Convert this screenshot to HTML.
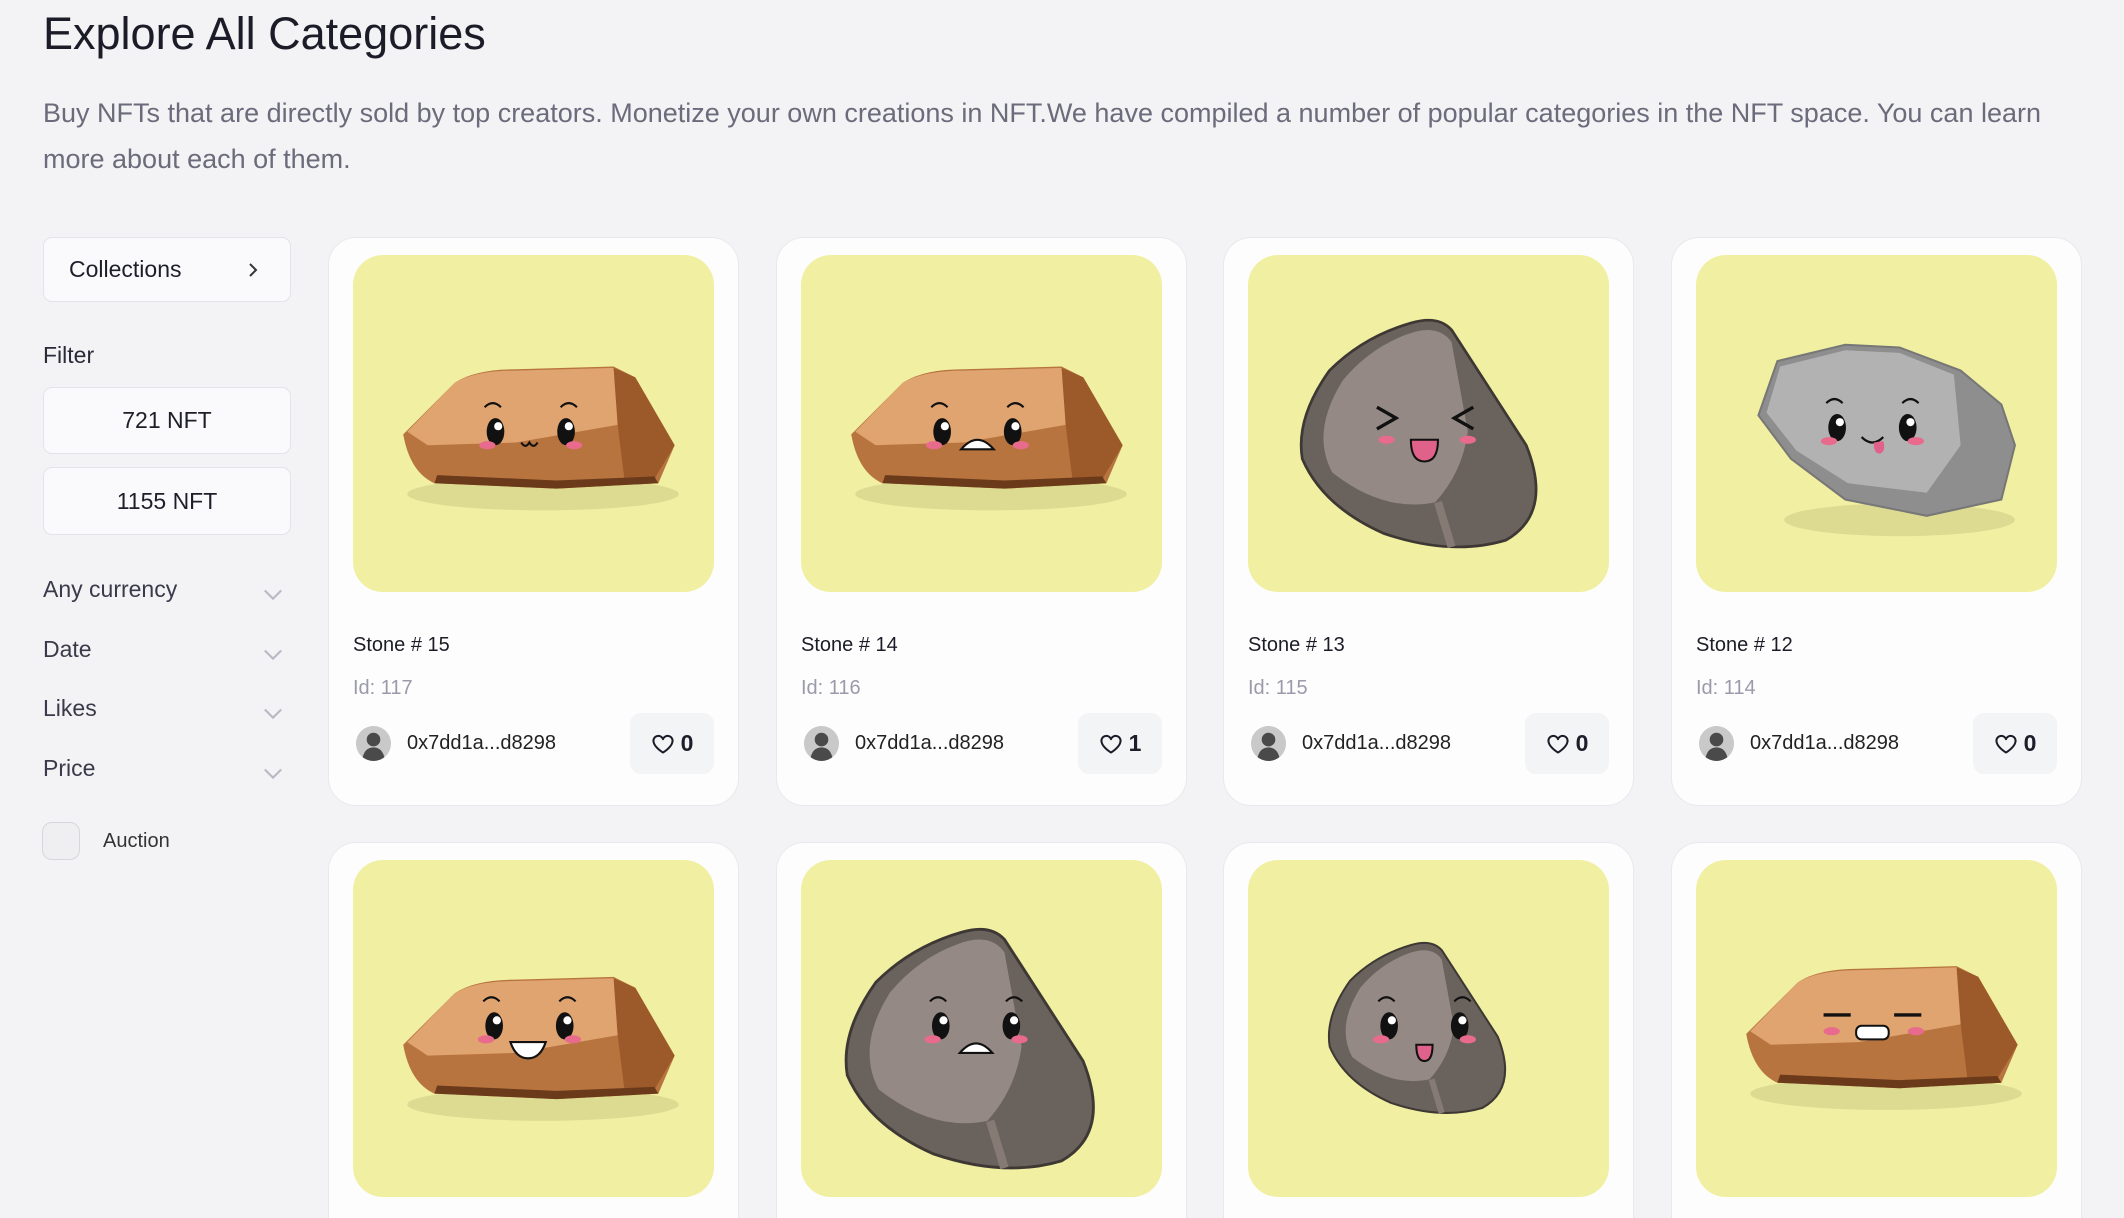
<!DOCTYPE html>
<html><head><meta charset="utf-8"><style>
*{box-sizing:border-box;margin:0;padding:0}
html{width:2124px;height:1218px;overflow:hidden}
body{width:2124px;height:1218px;overflow:hidden;background:#f3f3f5;font-family:"Liberation Sans",Arial,sans-serif;color:#1e1e2a;position:relative}
h1{position:absolute;left:43px;top:8px;font-size:45px;font-weight:400;color:#1c1c28}
.desc{position:absolute;left:43px;top:90px;width:2040px;font-size:27px;line-height:46px;color:#6b6b7b}
.box{position:absolute;left:43px;width:248px;background:#fafafc;border:1.5px solid #e3e3e9;border-radius:9px;font-size:23px;display:flex;align-items:center}
.sel{position:absolute;left:43px;width:248px;font-size:23px;color:#3a3a4a}
.sel svg{position:absolute;right:4px;top:4px}
.card{position:absolute;width:411px;height:569px;background:#fdfdfd;border:1.5px solid #e9e9ec;border-radius:28px}
.card.r2{height:376px;border-bottom:none;border-radius:28px 28px 0 0}
.img{position:absolute;left:24px;top:17px;width:361px;height:337px;background:#f1efa1;border-radius:30px;overflow:hidden}
.img svg{width:100%;height:100%}
.nm{position:absolute;left:24px;top:396px;font-size:20px;color:#1c1c28}
.id{position:absolute;left:24px;top:439px;font-size:20px;color:#9a9aaa}
.av{position:absolute;left:27px;top:488px;width:35px;height:35px;border-radius:50%;background:#c8c8c8;overflow:hidden}
.ad{position:absolute;left:78px;top:494px;font-size:20px;color:#222}
.lk{position:absolute;left:301px;top:475px;width:84px;height:61px;background:#f3f4f6;border-radius:11px;display:flex;align-items:center;justify-content:center;gap:6px;font-weight:700;font-size:23px}
</style></head><body>
<svg width="0" height="0" style="position:absolute">
<defs>
<symbol id="brick" viewBox="0 0 266 248">
<ellipse cx="140" cy="176" rx="100" ry="12" fill="#d8d48e" opacity=".8"/>
<path d="M37,132 L75,94 Q90,84 120,84 L192,82 L208,90 L237,140 L225,168 L150,172 L60,168 Q42,160 37,132Z" fill="#b8743f"/>
<path d="M40,130 L75,94 Q90,85 120,85 L192,83 L200,100 L195,125 L120,138 L55,140Z" fill="#e0a470"/>
<path d="M192,83 L208,90 L237,140 L222,165 L200,165 L195,125Z" fill="#9c5a2a"/>
<path d="M60,168 L150,172 L225,168 L222,163 L150,166 L62,162Z" fill="#6b3a1a"/>
</symbol>
<symbol id="round" viewBox="0 0 266 248">
<path d="M120,50 Q140,44 150,55 L205,140 Q225,190 190,210 Q150,222 100,205 Q55,185 40,150 Q35,120 60,85 Q85,60 120,50Z" fill="#6a625d" stroke="#3e3834" stroke-width="2"/>
<path d="M118,58 Q140,50 150,64 L162,130 Q158,160 138,182 Q100,190 62,160 Q46,130 70,92 Q90,68 118,58Z" fill="#948984"/>
<path d="M140,182 L150,215" stroke="#857a74" stroke-width="6"/>
</symbol>
<symbol id="flat" viewBox="0 0 266 248">
<ellipse cx="150" cy="195" rx="85" ry="12" fill="#d8d48e" opacity=".8"/>
<path d="M60,78 L110,66 L150,68 L195,85 L225,110 L235,140 L225,180 L170,192 L110,180 L70,150 L46,118Z" fill="#8e8e8e" stroke="#777" stroke-width="1.5"/>
<path d="M62,82 L110,70 L150,72 L190,88 L195,140 L170,175 L112,168 L74,144 L52,116Z" fill="#b2b2b2"/>
</symbol>
<symbol id="eyes" viewBox="-60 -30 120 60">
<path d="M-34,-18 q6,-6 12,0 M22,-18 q6,-6 12,0" stroke="#111" stroke-width="1.6" fill="none"/>
<ellipse cx="-26" cy="0" rx="6.5" ry="10" fill="#111"/><ellipse cx="26" cy="0" rx="6.5" ry="10" fill="#111"/>
<circle cx="-24" cy="-4" r="3" fill="#fff"/><circle cx="28" cy="-4" r="3" fill="#fff"/>
<ellipse cx="-32" cy="10" rx="6" ry="3" fill="#e86a8c"/><ellipse cx="32" cy="10" rx="6" ry="3" fill="#e86a8c"/>
</symbol>
<symbol id="av" viewBox="0 0 36 36"><circle cx="18" cy="18" r="18" fill="#c9c9c9"/><circle cx="18" cy="14" r="7" fill="#4a4a4a"/><path d="M6,36 Q8,22 18,22 Q28,22 30,36Z" fill="#4a4a4a"/></symbol>
<symbol id="heart" viewBox="0 0 24 24"><path d="M12 20.5s-8-4.8-9.3-10A4.8 4.8 0 0 1 12 7.2a4.8 4.8 0 0 1 9.3 3.3c-1.3 5.2-9.3 10-9.3 10z" fill="none" stroke="#1c1c28" stroke-width="2" stroke-linejoin="round"/></symbol>
<symbol id="chev" viewBox="0 0 24 24"><path d="M5 9l7 7 7-7" fill="none" stroke="#b9b9c6" stroke-width="1.8"/></symbol>
</defs></svg>

<h1>Explore All Categories</h1>
<div class="desc">Buy NFTs that are directly sold by top creators. Monetize your own creations in NFT.We have compiled a number of popular categories in the NFT space. You can learn more about each of them.</div>

<div class="box" style="top:237px;height:65px;padding-left:25px">Collections<svg style="position:absolute;right:30px;top:24px" width="14" height="16" viewBox="0 0 14 16"><path d="M4 2l6 6-6 6" fill="none" stroke="#333" stroke-width="2"/></svg></div>
<div style="position:absolute;left:43px;top:342px;font-size:23px;color:#2a2a38">Filter</div>
<div class="box" style="top:387px;height:67px;justify-content:center">721 NFT</div>
<div class="box" style="top:467px;height:68px;justify-content:center">1155 NFT</div>
<div class="sel" style="top:576px">Any currency<svg width="28" height="28"><use href="#chev"/></svg></div>
<div class="sel" style="top:636px">Date<svg width="28" height="28"><use href="#chev"/></svg></div>
<div class="sel" style="top:695px">Likes<svg width="28" height="28"><use href="#chev"/></svg></div>
<div class="sel" style="top:755px">Price<svg width="28" height="28"><use href="#chev"/></svg></div>
<div style="position:absolute;left:42px;top:822px;width:38px;height:38px;border-radius:10px;background:#efeff1;border:1.5px solid #d6d6dc"></div>
<div style="position:absolute;left:103px;top:830px;font-size:20px;color:#333">Auction</div>

<!-- row 1 -->
<div class="card" style="left:328px;top:237px"><div class="img"><svg viewBox="0 0 266 248"><use href="#brick" width="266" height="248"/><use href="#eyes" x="71" y="100" width="120" height="60"/><path d="M124,138 q3,5 6,0 q3,5 6,0" stroke="#111" stroke-width="1.6" fill="none"/></svg></div>
<div class="nm">Stone # 15</div><div class="id">Id: 117</div><svg class="av" width="35" height="35"><use href="#av"/></svg><div class="ad">0x7dd1a...d8298</div><div class="lk"><svg width="24" height="24"><use href="#heart"/></svg>0</div></div>

<div class="card" style="left:776px;top:237px"><div class="img"><svg viewBox="0 0 266 248"><use href="#brick" width="266" height="248"/><use href="#eyes" x="70" y="100" width="120" height="60"/><path d="M118,143 q12,-14 24,0 z" fill="#fff" stroke="#111" stroke-width="1.6"/></svg></div>
<div class="nm">Stone # 14</div><div class="id">Id: 116</div><svg class="av" width="35" height="35"><use href="#av"/></svg><div class="ad">0x7dd1a...d8298</div><div class="lk"><svg width="24" height="24"><use href="#heart"/></svg>1</div></div>

<div class="card" style="left:1223px;top:237px"><div class="img"><svg viewBox="0 0 266 248"><use href="#round" width="266" height="248"/><path d="M95,112 l14,8 -14,8 M166,112 l-14,8 14,8" stroke="#111" stroke-width="2.5" fill="none"/><ellipse cx="102" cy="136" rx="6" ry="3" fill="#e86a8c"/><ellipse cx="162" cy="136" rx="6" ry="3" fill="#e86a8c"/><path d="M120,136 h20 q0,16 -10,16 q-10,0 -10,-16z" fill="#e0628a" stroke="#111" stroke-width="1.5"/></svg></div>
<div class="nm">Stone # 13</div><div class="id">Id: 115</div><svg class="av" width="35" height="35"><use href="#av"/></svg><div class="ad">0x7dd1a...d8298</div><div class="lk"><svg width="24" height="24"><use href="#heart"/></svg>0</div></div>

<div class="card" style="left:1671px;top:237px"><div class="img"><svg viewBox="0 0 266 248"><use href="#flat" width="266" height="248"/><use href="#eyes" x="70" y="97" width="120" height="60"/><path d="M122,134 q8,8 16,0" stroke="#111" stroke-width="1.6" fill="none"/><path d="M131,138 q0,9 5,8 q4,-2 2,-9z" fill="#e0628a"/></svg></div>
<div class="nm">Stone # 12</div><div class="id">Id: 114</div><svg class="av" width="35" height="35"><use href="#av"/></svg><div class="ad">0x7dd1a...d8298</div><div class="lk"><svg width="24" height="24"><use href="#heart"/></svg>0</div></div>

<!-- row 2 -->
<div class="card r2" style="left:328px;top:842px"><div class="img"><svg viewBox="0 0 266 248"><use href="#brick" y="4" width="266" height="248"/><use href="#eyes" x="70" y="92" width="120" height="60"/><path d="M116,134 h26 q-4,12 -13,12 q-9,0 -13,-12z" fill="#fff" stroke="#111" stroke-width="1.6"/></svg></div></div>
<div class="card r2" style="left:776px;top:842px"><div class="img"><svg viewBox="0 0 266 248"><use href="#round" x="-8" y="0" width="280" height="262"/><use href="#eyes" x="69" y="92" width="120" height="60"/><path d="M117,142 q12,-14 24,0 z" fill="#fff" stroke="#111" stroke-width="1.6"/></svg></div></div>
<div class="card r2" style="left:1223px;top:842px"><div class="img"><svg viewBox="0 0 266 248"><use href="#round" x="30" y="25" width="200" height="186"/><use href="#eyes" x="70" y="92" width="120" height="60"/><path d="M124,136 h12 q0,12 -6,12 q-6,0 -6,-12z" fill="#e0628a" stroke="#111" stroke-width="1.5"/></svg></div></div>
<div class="card r2" style="left:1671px;top:842px"><div class="img"><svg viewBox="0 0 266 248"><use href="#brick" y="-4" width="266" height="248"/><path d="M94,114 h20 M146,114 h20" stroke="#111" stroke-width="2.5"/><ellipse cx="100" cy="126" rx="6" ry="3" fill="#e86a8c"/><ellipse cx="162" cy="126" rx="6" ry="3" fill="#e86a8c"/><rect x="118" y="122" width="24" height="10" rx="4" fill="#fff" stroke="#111" stroke-width="1.5"/></svg></div></div>
</body></html>
